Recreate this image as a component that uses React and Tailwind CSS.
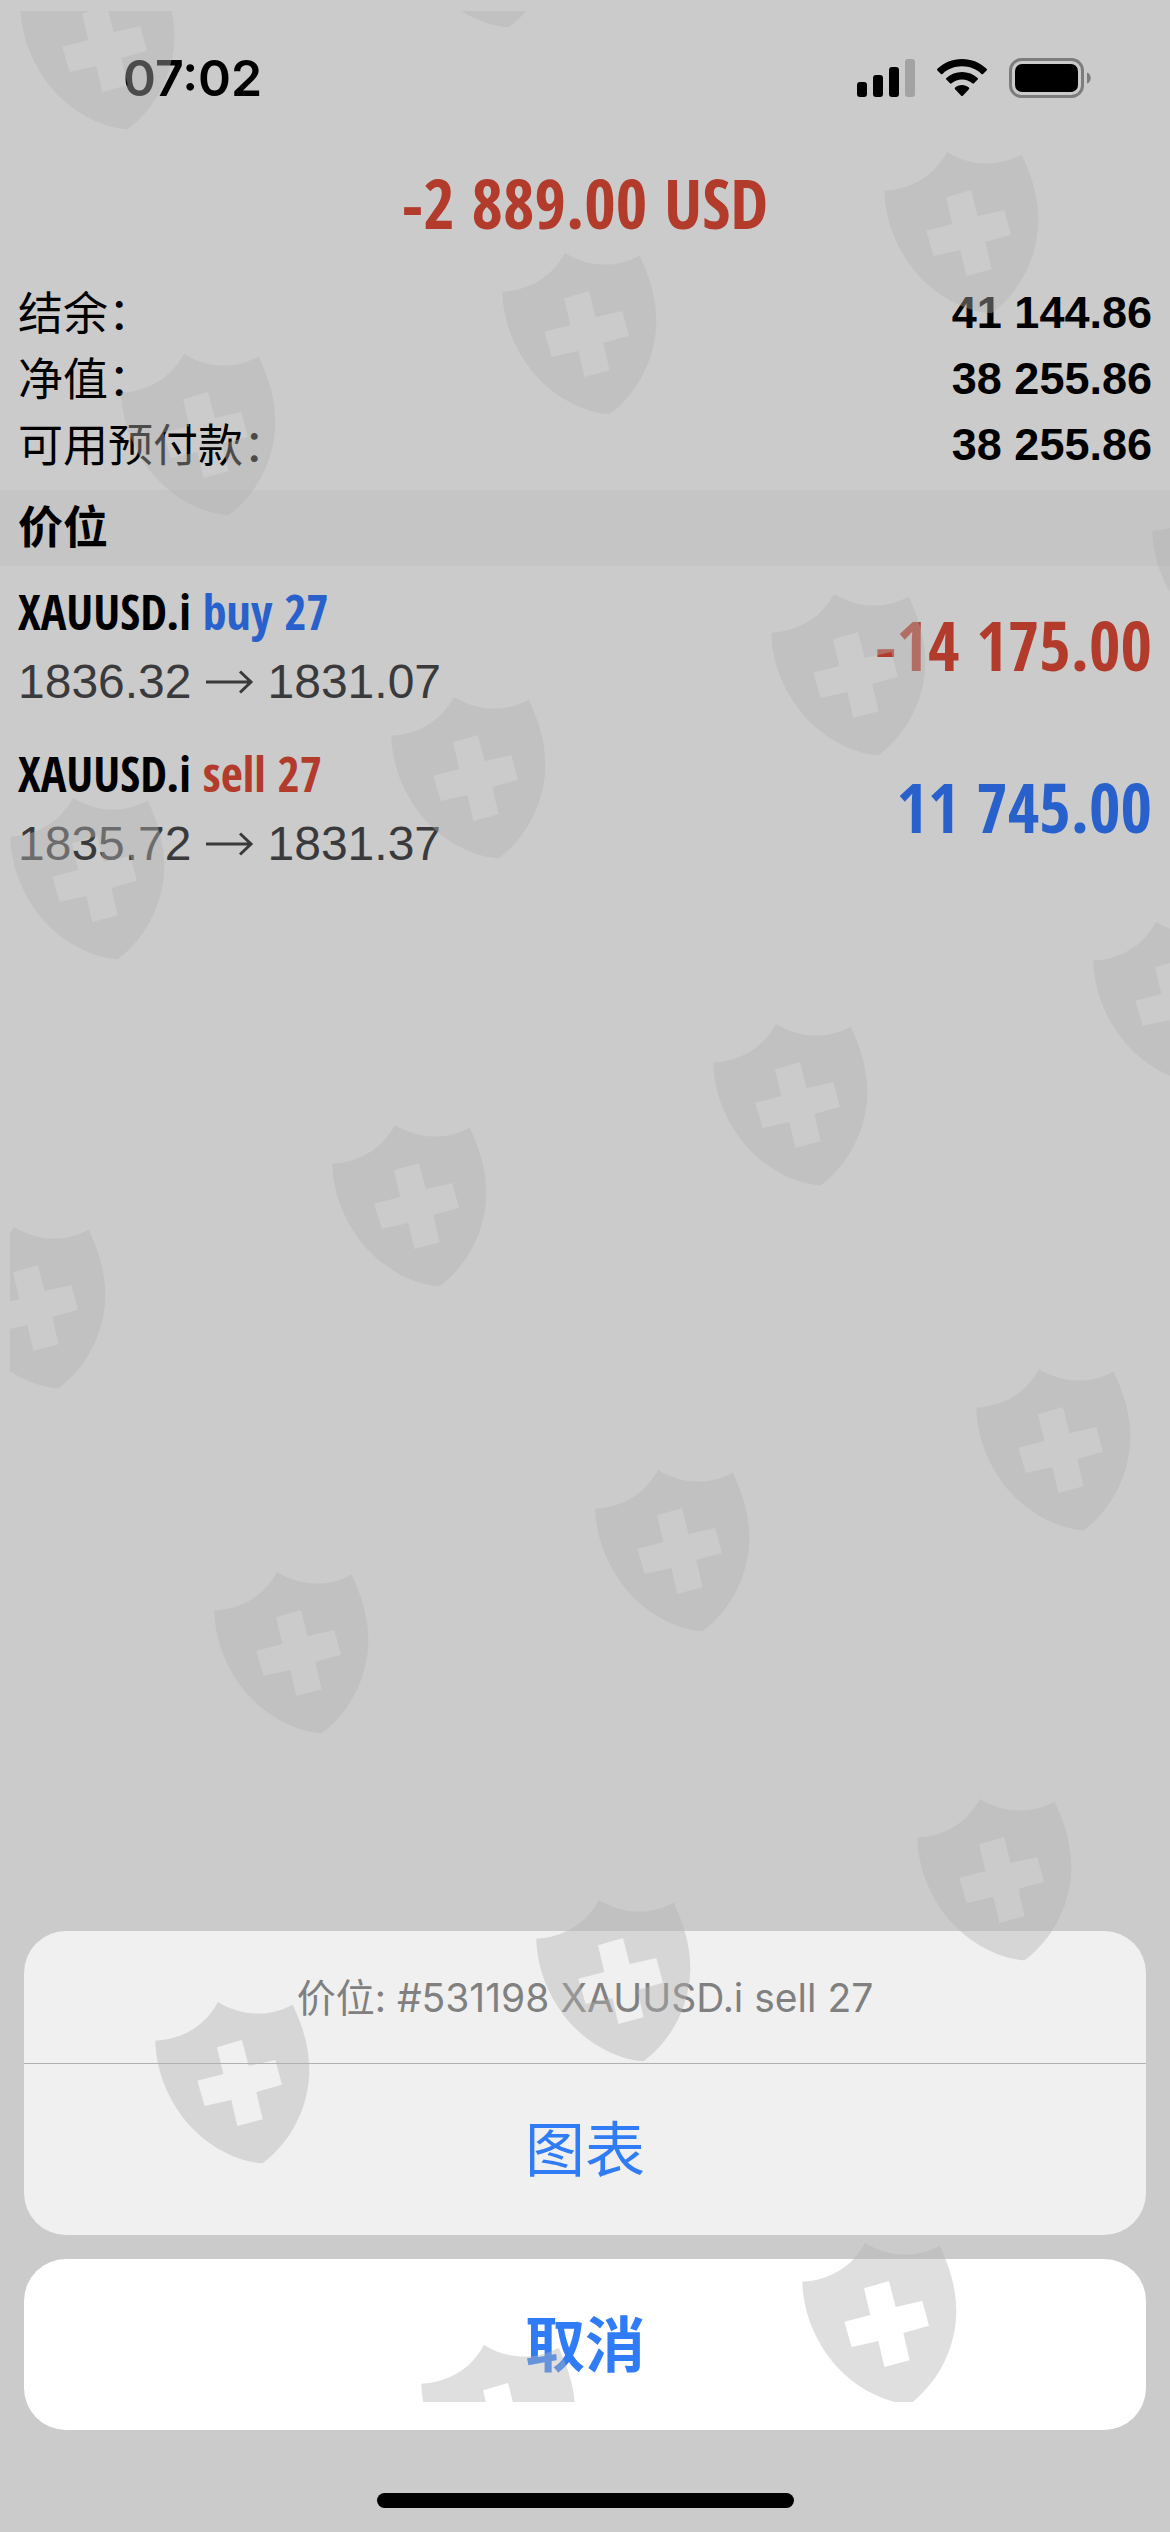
import { useState } from "react";

const account = [
  { label: "结余：", value: "41 144.86" },
  { label: "净值：", value: "38 255.86" },
  { label: "可用预付款：", value: "38 255.86" },
];

const positions = [
  { id: 1, symbol: "XAUUSD.i", side: "buy", volume: 27, open: "1836.32", current: "1831.07", profit: "-14 175.00" },
  { id: 2, symbol: "XAUUSD.i", side: "sell", volume: 27, open: "1835.72", current: "1831.37", profit: "11 745.00" },
];

// Where each shield of the watermark sits
const shields = [
  [378, -158], [-3, -56],
  [861, 128], [479, 229], [98, 330],
  [1129, 468], [748, 570], [368, 673], [-13, 774],
  [1070, 898], [690, 1000], [309, 1101], [-72, 1203],
  [953, 1345], [572, 1446], [191, 1548],
  [894, 1775], [513, 1876], [132, 1978],
  [779, 2219], [398, 2321],
];

function StatusBar() {
  return (
    <div className="flex items-center justify-between pl-[123px] pr-[77px] pt-[46px]">
      <span className="text-[50px] leading-[64px] font-semibold">07:02</span>
      <div className="flex items-center gap-[22px]">
        <svg className="w-[58px] h-[38px]" viewBox="0 0 58 38">
          <rect x="0" y="23" width="10" height="15" rx="3" />
          <rect x="16" y="16" width="10" height="22" rx="3" />
          <rect x="32" y="8" width="10" height="30" rx="3" />
          <rect x="48" y="0" width="10" height="38" rx="3" fill="#a3a3a3" />
        </svg>
        <svg className="w-[50px] h-[38px]" viewBox="0 0 50 38">
          <path d="M25 0C34.500 0 43.300 3.700 49.600 9.800Q50.300 10.600 49.600 11.400L46 15Q45.300 15.600 44.500 14.900C39.200 10 32.400 7.300 25 7.300S10.800 10 5.500 14.900Q4.700 15.600 4 15L.4 11.400Q-.3 10.600 .4 9.800C6.700 3.700 15.500 0 25 0Z" />
          <path d="M25 13C31 13 36.400 15.200 40.600 19Q41.500 19.800 40.700 20.600L37 24.300Q36.200 25 35.400 24.300C32.500 21.800 28.900 20.400 25 20.400S17.500 21.800 14.600 24.300Q13.800 25 13 24.300L9.300 20.600Q8.500 19.800 9.400 19C13.600 15.200 19 13 25 13Z" />
          <path d="M25 26C27.700 26 30 27 31.900 28.600Q32.700 29.400 31.900 30.200L25.800 36.700Q25 37.500 24.200 36.700L18.100 30.200Q17.300 29.400 18.100 28.600C20 27 22.300 26 25 26Z" />
        </svg>
        <svg className="w-[84px] h-[40px]" viewBox="0 0 84 40">
          <rect x="1.500" y="1.500" width="72" height="37" rx="11" fill="none" stroke="#7d7d7d" strokeWidth="3" />
          <rect x="6" y="6" width="63" height="28" rx="7" />
          <path d="M78 14.500C83 16 83 24 78 25.500Z" fill="#7d7d7d" />
        </svg>
      </div>
    </div>
  );
}

function Position({ item }) {
  return (
    <li className="flex items-center justify-between h-[162px] px-[18px]">
      <div>
        <p className="font-['Open_Sans_Condensed',sans-serif] font-bold text-[48px] leading-[70px]">
          {item.symbol}{" "}
          <span className={item.side === "buy" ? "text-[#2861cc]" : "text-[#b23b2b]"}>
            {item.side} {item.volume}
          </span>
        </p>
        <p className="flex items-center gap-[14px] text-[#3a3a3c] font-['Liberation_Sans',sans-serif] text-[48px] leading-[70px]">
          {item.open}
          <svg className="w-12 h-6" viewBox="0 0 48 24" fill="none" stroke="currentColor" strokeWidth="3">
            <path d="M0 12H45M34 1.500L45 12L34 22.500" />
          </svg>
          {item.current}
        </p>
      </div>
      <span
        className={`pb-1 font-['Open_Sans_Condensed',sans-serif] font-bold text-[68px] leading-[70px] ${
          item.profit.startsWith("-") ? "text-[#b23b2b]" : "text-[#2861cc]"
        }`}
      >
        {item.profit}
      </span>
    </li>
  );
}

function ActionSheet({ onClose }) {
  return (
    <div className="mt-auto mx-6 mb-[63px] flex flex-col gap-6">
      <div className="rounded-[42px] bg-[#f0f0f0] overflow-hidden text-center">
        <p className="h-[132px] leading-[134px] text-[39px] text-[#808080]">价位: #531198 XAUUSD.i sell 27</p>
        <button className="block w-full h-[172px] border-t border-[#b0b0b0] text-[60px] text-[#2f7cf6]">图表</button>
      </div>
      <button onClick={onClose} className="h-[171px] rounded-[42px] bg-white text-[60px] font-bold text-[#2f7cf6]">
        取消
      </button>
    </div>
  );
}

function Watermark() {
  return (
    <div className="absolute left-[10px] top-[11px] right-0 bottom-[130px] overflow-hidden pointer-events-none">
      <svg className="w-full h-full" fill="#b2b2b2" fillOpacity="0.42" aria-hidden="true">
        <defs>
          <path
            id="shield"
            fillRule="evenodd"
            d="M70 188C150 184 218 146 258 72C330 116 410 118 482 80C515 150 532 210 532 280C530 385 480 490 392 556C320 552 235 510 175 445C110 372 72 280 70 188ZM255 208L330 186L350 264L430 246L450 320L373 342L392 424L316 444L298 366L218 384L196 308L274 288Z"
          />
        </defs>
        <g transform="translate(-10 -11)">
          {shields.map(([x, y]) => (
            <use key={`${x},${y}`} href="#shield" transform={`translate(${x} ${y}) scale(0.3333)`} />
          ))}
        </g>
      </svg>
    </div>
  );
}

export default function App() {
  const [sheetOpen, setSheetOpen] = useState(true);

  return (
    <div className="relative flex flex-col min-h-screen overflow-hidden bg-[#cbcbcb] text-black font-['Inter','Noto_Sans_CJK_SC',sans-serif]">
      <StatusBar />
      <h1 className="mt-[60px] text-center font-['Open_Sans_Condensed',sans-serif] font-bold text-[68px] leading-[66px] text-[#b23b2b]">
        -2 889.00 USD
      </h1>
      <dl className="mt-[43px] mb-[13px] px-[18px] text-[45px] leading-[66px]">
        {account.map((row) => (
          <div key={row.label} className="flex items-end justify-between">
            <dt className="font-['Noto_Sans_CJK_SC',sans-serif] leading-[64px] pb-[2px]">{row.label}</dt>
            <dd className="font-['Liberation_Sans',sans-serif] font-bold leading-[64px]">{row.value}</dd>
          </div>
        ))}
      </dl>
      <h2 className="px-[18px] bg-[#c5c5c5] text-[45px] leading-[76px] font-bold">价位</h2>
      <ul>
        {positions.map((item) => (
          <Position key={item.id} item={item} />
        ))}
      </ul>
      {sheetOpen && <ActionSheet onClose={() => setSheetOpen(false)} />}
      <div className={`w-[417px] h-[15px] mb-6 mx-auto rounded-full bg-black ${sheetOpen ? "" : "mt-auto"}`} />
      <Watermark />
    </div>
  );
}
